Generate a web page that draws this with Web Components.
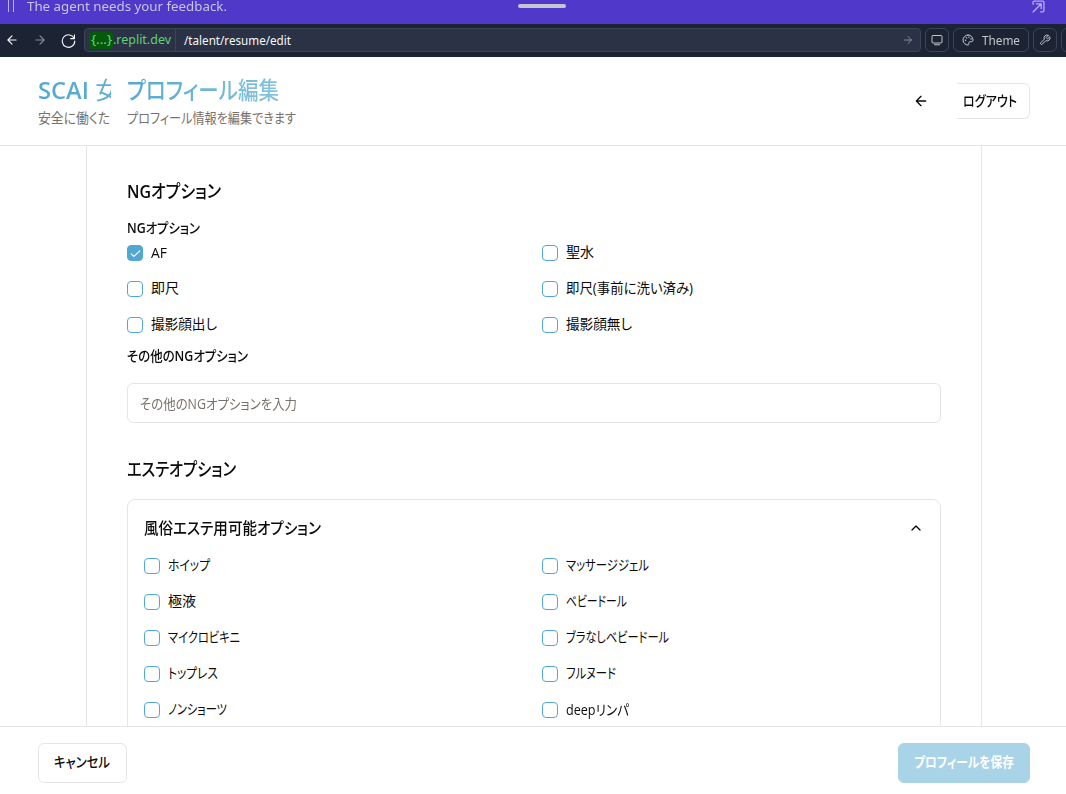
<!DOCTYPE html>
<html lang="ja">
<head>
<meta charset="utf-8">
<title>プロフィール編集</title>
<style>
html,body{margin:0;height:100%;overflow:hidden;background:#fff}
body{font-family:"Open Sans","Noto Sans CJK JP",sans-serif;font-size:14px;color:#0c0a09}
</style>
</head>
<body>
<resume-app></resume-app>
<script>
const define = (name, html, setup) => {
  const t = document.createElement('template');
  t.innerHTML = html;
  customElements.define(name, class extends HTMLElement {
    connectedCallback() {
      if (this.shadowRoot) return;
      this.attachShadow({ mode: 'open' }).append(t.content.cloneNode(true));
      if (setup) setup(this, this.shadowRoot);
    }
  });
};

/* One line of text set to a given advance width. */
define('fit-text', `<style>
:host{display:block;flex:none;white-space:nowrap;line-height:20px;font-feature-settings:"palt"}
span{display:inline-block;transform-origin:0 50%;vertical-align:top}
:host([gradient]) span{background:linear-gradient(90deg,#53a8d2,var(--end,#84c3de));-webkit-background-clip:text;background-clip:text;color:transparent}
</style><span><slot></slot></span>`, (el, root) => {
  const w = +el.getAttribute('w');
  const s = root.querySelector('span');
  el.style.width = w + 'px';
  const n = s.offsetWidth ? s.getBoundingClientRect().width : w;
  s.style.transform = `translateY(${el.getAttribute('dy') || 0}px) scaleX(${w / n})`;
});

const icons = {
  left: '<path d="M19 12H5m7-7-7 7 7 7"/>',
  right: '<path d="M5 12h14m-7-7 7 7-7 7"/>',
  up: '<path d="m6 15 6-6 6 6"/>',
  check: '<path d="m4 12.5 5 5L20 7"/>',
  reload: '<path d="M21.5 3v6h-6M21.2 9A10 10 0 1 0 22 13"/>',
  monitor: '<rect x="2" y="3" width="20" height="15" rx="2"/><path d="M7 21.5h10"/>',
  palette: '<path d="M12 2a10 10 0 0 0 0 20c1.700 0 2-1.200 1.700-2.500-.6-2.500 0-4 2.500-4H19c2 0 3-1.500 3-3.500C22 6 17.500 2 12 2z"/><path d="M7 12.500v.2M9 7.500v.2M14 6.500v.2M18 10v.2" stroke-width="3"/>',
  wrench: '<path d="M14.700 6.300a1 1 0 0 0 0 1.400l1.600 1.600a1 1 0 0 0 1.400 0l3.800-3.800a6 6 0 0 1-7.900 7.900l-6.900 6.900a2.100 2.100 0 0 1-3-3l6.900-6.900a6 6 0 0 1 7.900-7.900z"/>',
  external: '<path d="M2 8V4a2 2 0 0 1 2-2h16a2 2 0 0 1 2 2v16a2 2 0 0 1-2 2h-4M2 22 17 7M8 7h9v9"/>'
};
define('ui-icon', `<style>:host{display:block;flex:none}svg{display:block;width:100%;height:100%;fill:none;stroke:currentColor;stroke-linecap:round;stroke-linejoin:round}</style><svg viewBox="0 0 24 24"></svg>`, (el, root) => {
  const size = el.getAttribute('size') || 16;
  el.style.width = el.style.height = size + 'px';
  const svg = root.querySelector('svg');
  svg.setAttribute('stroke-width', el.getAttribute('stroke') || 2);
  svg.innerHTML = icons[el.getAttribute('name')];
});

define('agent-bar', `<style>
:host{display:flex;align-items:flex-start;height:24px;box-sizing:border-box;padding:0 21px 0 8px;background:#5038cb;color:#c5c6dc;font-family:"Noto Sans",sans-serif;font-size:13px}
.p{width:4px;height:12px;border:solid #b9b2e8;border-width:0 1px;margin-right:13px}
.g{width:48px;height:4px;margin:4px auto 0 291px;border-radius:2px;background:#c3c8cc}
ui-icon{color:#b9afe9}
fit-text{line-height:13px}
</style><div class="p"></div><fit-text w="200">The agent needs your feedback.</fit-text><div class="g"></div><ui-icon name="external" size="13" stroke="2.4"></ui-icon>`);

define('browser-bar', `<style>
:host{display:flex;align-items:center;height:33px;box-sizing:border-box;padding:0 0 1px 5px;background:#1c2333;color:#f5f9fc;font-family:"Noto Sans",sans-serif;font-size:13px;overflow:hidden}
.nav{display:flex;width:79px;gap:14px;align-items:center;flex:none}
.url{display:flex;align-items:center;box-sizing:border-box;width:837px;height:24px;border:1px solid #3c445c;border-radius:4px;background:#2b3245;flex:none;padding-left:4px}
.chip{background:#04590a;color:#5fdd71;border-radius:4px;height:17px;width:24px;display:flex;justify-content:center;align-items:center}
.dom{color:#5fd173}
.path{border-left:1px solid #3c445c;height:22px;display:flex;align-items:center;margin-left:4px;padding-left:8px;flex:1}
.btn{display:flex;align-items:center;justify-content:center;box-sizing:border-box;height:24px;width:24px;border:1px solid #3c445c;border-radius:6px;margin-left:4px;flex:none;color:#c2c8cc}
.theme{width:76px;gap:8px}
.dim{color:#858b99}.go{margin-right:6px}
</style>
<div class="nav"><ui-icon name="left" size="14"></ui-icon><ui-icon class="dim" name="right" size="14"></ui-icon><ui-icon name="reload" size="15" stroke="1.8"></ui-icon></div>
<div class="url"><div class="chip"><fit-text w="21" dy="-1">{...}</fit-text></div><fit-text class="dom" w="58" dy="-1">.replit.dev</fit-text><div class="path"><fit-text w="107" dy="-0.5">/talent/resume/edit</fit-text></div><ui-icon class="dim go" name="right" size="12"></ui-icon></div>
<div class="btn"><ui-icon name="monitor" size="12"></ui-icon></div>
<div class="btn theme"><ui-icon name="palette" size="12"></ui-icon><fit-text w="38">Theme</fit-text></div>
<div class="btn"><ui-icon name="wrench" size="12"></ui-icon></div>
<div class="btn"></div>`);

define('page-header', `<style>
:host{display:flex;height:89px;box-sizing:border-box;border-bottom:1px solid #e5e5e5;padding:0 36px 0 38px;align-items:flex-start}
.brand{width:73px;overflow:hidden;margin-right:16px}
.brand,.title{padding-top:17px}
.t{font-size:24px;font-weight:500;line-height:32px}
.brand .t{font-weight:600}
.thin{font-weight:400}
.s{color:#78716c;margin-top:3px}
.title{flex:1}
ui-icon{margin:36px 28px 0 0}
.out{box-sizing:border-box;width:73px;height:36px;margin-top:26px;border:1px solid #e5e5e5;border-left:0;border-radius:0 6px 6px 0;padding:7px 0 0 6px;font-weight:500}
</style>
<div class="brand"><fit-text class="t" gradient style="--end:#5eadd4" w="81">SCAI <span class="thin">女</span></fit-text><fit-text class="s" w="72" dy="-1">安全に働くた</fit-text></div>
<div class="title"><fit-text class="t" gradient w="152">プロフィール編集</fit-text><fit-text class="s" w="169" dy="-1">プロフィール情報を編集できます</fit-text></div>
<ui-icon name="left" size="16"></ui-icon><div class="out"><fit-text w="54">ログアウト</fit-text></div>`);

define('check-item', `<style>
:host{display:flex;align-items:center;height:20px;gap:8px}
.b{box-sizing:border-box;width:16px;height:16px;border:1px solid #53a8d2;border-radius:4px;color:#fff;display:flex;align-items:center;justify-content:center}
ui-icon{display:none}
:host([checked]) .b{background:#53a8d2}
:host([checked]) ui-icon{display:block}
</style><div class="b"><ui-icon name="check" size="13" stroke="2"></ui-icon></div><slot></slot>`);

define('check-grid', `<style>:host{display:grid;grid-template-columns:1fr 1fr;gap:16px}</style><slot></slot>`);

define('resume-form', `<style>
:host{display:block;width:896px;height:580px;margin-left:86px;box-sizing:border-box;border:solid #e5e5e5;border-width:0 1px;padding:31px 40px 0;overflow:hidden}
.h{font-size:18px;font-weight:500;line-height:28px}
.l{font-weight:500}
b{font-weight:600}
.in{box-sizing:border-box;height:40px;border:1px solid #e5e5e5;border-radius:6px;margin:17px 0 32px;padding:10px 12px;color:#78716c}
.card{box-sizing:border-box;height:260px;margin-top:16px;border:1px solid #e5e5e5;border-radius:8px;padding:16px}
.ch{display:flex;justify-content:space-between;align-items:center;height:24px;margin-bottom:16px;font-size:16px;font-weight:500}
</style>
<fit-text class="h" w="94"><b>NG</b>オプション</fit-text>
<fit-text class="l" style="margin:13px 0 5px" w="73"><b>NG</b>オプション</fit-text>
<check-grid>
<check-item checked><fit-text w="16">AF</fit-text></check-item><check-item><fit-text w="28" dy="-1">聖水</fit-text></check-item>
<check-item><fit-text w="28" dy="-1">即尺</fit-text></check-item><check-item><fit-text w="127" dy="-1">即尺(事前に洗い済み)</fit-text></check-item>
<check-item><fit-text w="66" dy="-1">撮影顔出し</fit-text></check-item><check-item><fit-text w="66" dy="-1">撮影顔無し</fit-text></check-item>
</check-grid>
<fit-text class="l" style="margin-top:11px" w="121">その他の<b>NG</b>オプション</fit-text>
<div class="in"><fit-text w="157">その他のNGオプションを入力</fit-text></div>
<fit-text class="h" w="109">エステオプション</fit-text>
<div class="card"><div class="ch"><fit-text w="177">風俗エステ用可能オプション</fit-text><ui-icon name="up" size="16"></ui-icon></div>
<check-grid>
<check-item><fit-text w="42" dy="-1">ホイップ</fit-text></check-item><check-item><fit-text w="83" dy="-1">マッサージジェル</fit-text></check-item>
<check-item><fit-text w="28" dy="-1">極液</fit-text></check-item><check-item><fit-text w="61" dy="-1">ベビードール</fit-text></check-item>
<check-item><fit-text w="72" dy="-1">マイクロビキニ</fit-text></check-item><check-item><fit-text w="103" dy="-1">ブラなしベビードール</fit-text></check-item>
<check-item><fit-text w="50" dy="-1">トップレス</fit-text></check-item><check-item><fit-text w="50" dy="-1">フルヌード</fit-text></check-item>
<check-item><fit-text w="59" dy="-1">ノンショーツ</fit-text></check-item><check-item><fit-text w="63">deepリンパ</fit-text></check-item>
</check-grid></div>`);

define('action-bar', `<style>
:host{display:flex;justify-content:space-between;align-items:flex-start;height:68px;box-sizing:border-box;border-top:1px solid #e5e5e5;padding:16px 36px 0 38px;font-weight:500}
div{box-sizing:border-box;height:40px;border:1px solid #e5e5e5;border-radius:6px;padding:9px 15px}
.c{width:89px}.s{width:132px;background:#a9d3e7;border-color:#a9d3e7;color:#fff;font-weight:700}
</style><div class="c"><fit-text w="56" dy="-1">キャンセル</fit-text></div><div class="s"><fit-text w="100" dy="-1">プロフィールを保存</fit-text></div>`);

define('resume-app', `<style>:host{display:flex;flex-direction:column;width:1066px;height:794px}</style>
<agent-bar></agent-bar><browser-bar></browser-bar><page-header></page-header><resume-form></resume-form><action-bar></action-bar>`);
</script>
</body>
</html>
